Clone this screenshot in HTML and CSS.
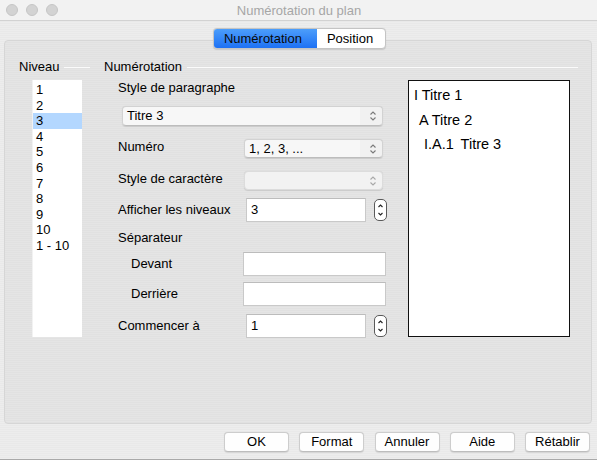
FILE: index.html
```html
<!DOCTYPE html>
<html lang="fr">
<head>
<meta charset="utf-8">
<title>Numérotation du plan</title>
<link rel="stylesheet" href="styles.css">
</head>
<body>
<div class="window">
  <div class="titlebar">
    <div class="lights"><span class="light"></span><span class="light"></span><span class="light"></span></div>
    <div class="title">Numérotation du plan</div>
    <div></div>
  </div>
  <div class="tabrow">
    <div class="segmented">
      <span class="seg seg-active">Numérotation</span>
      <span class="seg">Position</span>
    </div>
  </div>
  <div class="panel">
    <div class="niveau">
      <div class="group-head"><span>Niveau</span><span class="rule"></span></div>
      <ul class="levels">
        <li>1</li><li>2</li><li class="sel">3</li><li>4</li><li>5</li><li>6</li><li>7</li><li>8</li><li>9</li><li>10</li><li>1 - 10</li>
      </ul>
    </div>
    <div class="numero">
      <div class="group-head"><span>Numérotation</span><span class="rule"></span></div>
      <div class="numero-body">
        <div class="form">
          <div class="row r-label1"><span class="lbl">Style de paragraphe</span></div>
          <div class="row r-popup-wide">
            <div class="popup wide"><span class="popup-text">Titre 3</span>
              <svg class="chev" width="8" height="12" viewBox="0 0 8 12"><path d="M1.5 4.5 L4 2 L6.5 4.5 M1.5 7.5 L4 10 L6.5 7.5" fill="none" stroke="#7a7a7a" stroke-width="1.1"/></svg>
            </div>
          </div>
          <div class="row r-numero"><span class="lbl col">Numéro</span>
            <div class="popup narrow"><span class="popup-text">1, 2, 3, ...</span>
              <svg class="chev" width="8" height="12" viewBox="0 0 8 12"><path d="M1.5 4.5 L4 2 L6.5 4.5 M1.5 7.5 L4 10 L6.5 7.5" fill="none" stroke="#7a7a7a" stroke-width="1.1"/></svg>
            </div>
          </div>
          <div class="row r-style"><span class="lbl col">Style de caractère</span>
            <div class="popup narrow disabled"><span class="popup-text"></span>
              <svg class="chev" width="8" height="12" viewBox="0 0 8 12"><path d="M1.5 4.5 L4 2 L6.5 4.5 M1.5 7.5 L4 10 L6.5 7.5" fill="none" stroke="#a8a8a8" stroke-width="1.1"/></svg>
            </div>
          </div>
          <div class="row r-afficher"><span class="lbl col2">Afficher les niveaux</span>
            <div class="field short">3</div>
            <div class="stepper"><svg width="11" height="20" viewBox="0 0 11 20"><path d="M3.5 7 L5.5 5 L7.5 7 M3.5 13 L5.5 15 L7.5 13" fill="none" stroke="#222" stroke-width="1.1"/></svg></div>
          </div>
          <div class="row r-sep"><span class="lbl">Séparateur</span></div>
          <div class="row r-devant"><span class="lbl col3">Devant</span><div class="field long"></div></div>
          <div class="row r-derriere"><span class="lbl col3">Derrière</span><div class="field long"></div></div>
          <div class="row r-commencer"><span class="lbl col2">Commencer à</span>
            <div class="field short">1</div>
            <div class="stepper"><svg width="11" height="20" viewBox="0 0 11 20"><path d="M3.5 7 L5.5 5 L7.5 7 M3.5 13 L5.5 15 L7.5 13" fill="none" stroke="#222" stroke-width="1.1"/></svg></div>
          </div>
        </div>
        <div class="preview">
          <div class="pv pv1">I Titre 1</div>
          <div class="pv pv2">A Titre 2</div>
          <div class="pv pv3"><span class="num">I.A.1</span> Titre 3</div>
        </div>
      </div>
    </div>
  </div>
  <div class="buttons">
    <button class="btn">OK</button>
    <button class="btn">Format</button>
    <button class="btn">Annuler</button>
    <button class="btn">Aide</button>
    <button class="btn">Rétablir</button>
  </div>
</div>
</body>
</html>
```
FILE: styles.css
```css
* { box-sizing: border-box; }
html, body { margin: 0; padding: 0; }
body {
  width: 597px;
  height: 461px;
  font-family: "Liberation Sans", Arial, sans-serif;
  font-size: 13px;
  color: #000;
  background: #ffffff;
  overflow: hidden;
}
.window {
  width: 597px;
  height: 460px;
  display: flex;
  flex-direction: column;
  background: repeating-linear-gradient(to bottom, #ededed 0, #ededed 1px, #e9e9e9 1px, #e9e9e9 2px);
  border-bottom: 1px solid #a9a9a9;
}
.titlebar {
  height: 21px;
  display: grid;
  grid-template-columns: 1fr auto 1fr;
  align-items: center;
  background: #f2f2f2;
  border-bottom: 1px solid #d2d2d2;
}
.lights { display: flex; gap: 8px; padding-left: 6px; }
.light {
  width: 12px; height: 12px; border-radius: 50%;
  background: #d3d3d3;
  border: 1px solid #c6c6c6;
}
.title { color: #a6a6a6; font-size: 13px; line-height: 16px; padding-top: 1px; padding-left: 1px; }

.tabrow {
  height: 19px;
  display: flex;
  justify-content: center;
  padding-left: 2px;
}
.segmented {
  position: relative;
  z-index: 1;
  margin-top: 7px;
  height: 21px;
  display: flex;
  border-radius: 4px;
  border: 1px solid #c4c4c4;
  background: #fff;
  box-shadow: 0 0.5px 1px rgba(0,0,0,0.12);
  overflow: hidden;
}
.seg {
  display: flex; align-items: center;
  padding: 0 12px 0 10px;
  font-size: 13px;
  color: #000;
}
.seg-active {
  width: 104px;
  padding-left: 11px;
  background: linear-gradient(to bottom, #4fa0fb, #1b6ff4);
  color: #0a0a0a;
  margin: -1px 0 -1px -1px;
}
.panel {
  margin-left: 4px;
  width: 588px;
  height: 384px;
  border: 1px solid #d6d6d6;
  border-radius: 4px;
  background: repeating-linear-gradient(to bottom, #e5e5e5 0, #e5e5e5 1px, #e1e1e1 1px, #e1e1e1 2px);
  display: flex;
  padding: 18px 13px 0 14px;
  gap: 14px;
}
.group-head {
  display: flex;
  align-items: center;
  height: 16px;
  line-height: 16px;
  gap: 5px;
}
.rule { flex: 1; height: 1px; background: #fbfbfb; margin-top: 1px; }
.niveau { width: 71px; display: flex; flex-direction: column; }
.levels {
  list-style: none;
  margin: 5px 0 0 13px;
  padding: 2px 0 0 0;
  width: 50px;
  height: 257px;
  background: #fff;
  border-left: 1px solid #f2f2f2;
}
.levels li {
  height: 15.6px;
  line-height: 15.6px;
  padding-left: 3px;
  font-size: 13px;
}
.levels li.sel { background: #b3d7ff; }
.numero { flex: 1; display: flex; flex-direction: column; }
.numero-body {
  margin-top: 5px;
  display: flex;
  padding-left: 14px;
  gap: 21px;
}
.form { width: 269px; display: flex; flex-direction: column; }
.row { display: flex; align-items: center; }
.lbl { white-space: nowrap; line-height: 16px; }
.lbl.col { width: 126px; padding-bottom: 4px; }
.lbl.col2 { width: 128px; }
.lbl.col3 { width: 125px; padding-left: 13px; }
.r-label1 { height: 15px; }
.r-popup-wide { margin-top: 11px; height: 20px; padding-left: 4px; }
.r-numero { margin-top: 13px; height: 19px; }
.r-style { margin-top: 13px; height: 19px; }
.r-afficher { margin-top: 8px; height: 24px; }
.r-sep { margin-top: 8px; height: 16px; }
.r-devant { margin-top: 6px; height: 24px; }
.r-derriere { margin-top: 6px; height: 24px; }
.r-commencer { margin-top: 8px; height: 24px; }

.popup {
  height: 100%;
  display: flex;
  align-items: center;
  justify-content: space-between;
  border-radius: 4px;
  background: linear-gradient(to right, #f7f7f7 0, #f7f7f7 calc(100% - 22px), #f1f1f1 calc(100% - 22px));
  border: 1px solid #d2d2d2;
  border-bottom-color: #bdbdbd;
  box-shadow: 0 0.5px 1px rgba(0,0,0,0.1);
  padding: 0 4px 0 4px;
}
.popup.wide { width: 261px; }
.popup.narrow { width: 139px; }
.popup.disabled { background: #f2f2f2; border-color: #dcdcdc; }
.popup-text { line-height: 16px; color: #000; }
.chev { display: block; margin-right: 1px; }

.field {
  height: 100%;
  background: #fff;
  border: 1px solid #c9c9c9;
  border-top-color: #bcbcbc;
  padding: 0 4px;
  display: flex;
  align-items: center;
  line-height: 16px;
}
.field.short { width: 120px; }
.field.long { width: 143px; }
.stepper {
  margin-left: 8px;
  width: 13px;
  height: 22px;
  border: 1px solid #5a5a5a;
  border-radius: 5px;
  background: #fff;
  display: flex;
  align-items: center;
  justify-content: center;
}
.stepper svg { display: block; }

.preview {
  width: 162px;
  height: 257px;
  background: #fff;
  border: 1px solid #111;
  padding: 2px 0 0 5px;
  font-size: 14.5px;
}
.pv { height: 24.5px; line-height: 24.5px; white-space: nowrap; }
.pv2 { padding-left: 5px; }
.pv3 { padding-left: 10px; }
.pv3 .num { margin-right: 3px; }

.buttons {
  display: flex;
  justify-content: flex-end;
  gap: 10.25px;
  padding-right: 7px;
  margin-top: 8px;
}
.btn {
  width: 65px;
  height: 20px;
  font-family: "Liberation Sans", Arial, sans-serif;
  font-size: 13px;
  color: #000;
  background: #fefefe;
  border: 1px solid #cdcdcd;
  border-bottom-color: #bdbdbd;
  border-radius: 4px;
  box-shadow: 0 0.5px 1px rgba(0,0,0,0.1);
  padding: 0;
  line-height: 16px;
}
```
